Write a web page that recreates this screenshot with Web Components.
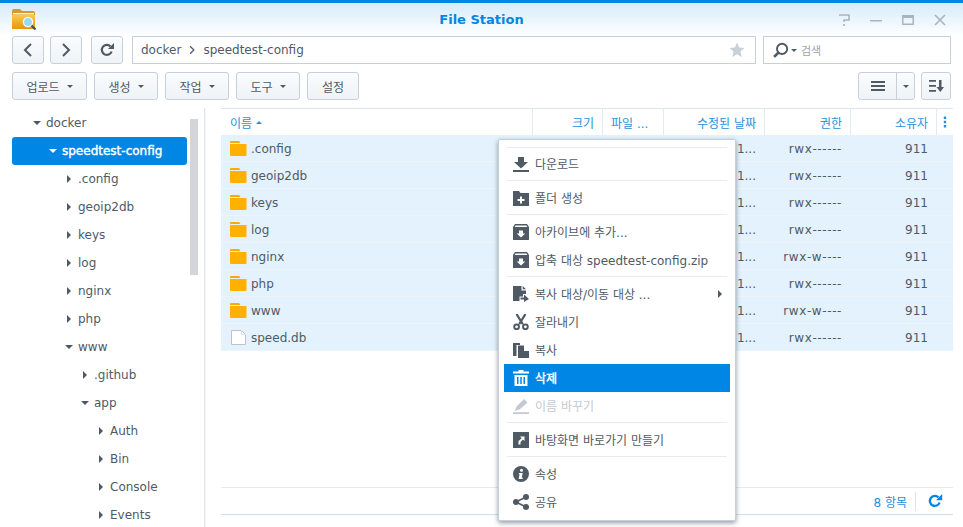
<!DOCTYPE html>
<html lang="ko">
<head>
<meta charset="utf-8">
<title>File Station</title>
<style>
  html, body { margin: 0; padding: 0; background: #fff; overflow: hidden; }
  body { font: 12px "DejaVu Sans", "Noto Sans CJK KR", sans-serif; color: #505a64; }
</style>
</head>
<body>
<fs-window>
  <fs-titlebar slot="title">File Station</fs-titlebar>
  <fs-toolbar slot="toolbar"></fs-toolbar>
  <fs-tree slot="tree"></fs-tree>
  <fs-grid slot="grid"></fs-grid>
  <fs-menu slot="menu"></fs-menu>
</fs-window>

<script>
(function() {
  'use strict';

  const ICONS = {
    back: '<path d="M11 2 5 8l6 6" fill="none" stroke="currentColor" stroke-width="2"/>',
    forward: '<path d="M5 2l6 6-6 6" fill="none" stroke="currentColor" stroke-width="2"/>',
    reload: '<path d="M12.600 9.500A5 5 0 1 1 11.400 4.400" fill="none" stroke="currentColor" stroke-width="2.200"/><path d="M9 7h6V1z" fill="currentColor"/>',
    star: '<path d="M8 .5l2.200 5 5.300.5-4 3.600 1.200 5.300L8 12.200l-4.700 2.700 1.200-5.300-4-3.600 5.300-.5z" fill="currentColor"/>',
    search: '<circle cx="9.500" cy="6.500" r="4.800" fill="none" stroke="currentColor" stroke-width="1.800"/><path d="M6 10l-4 4" stroke="currentColor" stroke-width="2.600"/>',
    list: '<path d="M1 3h14v2H1zM1 7h14v2H1zM1 11h14v2H1z" fill="currentColor"/>',
    sort: '<path d="M1 2h7v1.700H1zM1 7h7v1.700H1zM1 12h7v1.700H1zM11 2h2.500v7H16l-3.700 5-3.800-5H11z" fill="currentColor"/>',
    help: '<path d="M3 3h10v5H8v2M8 12v2" fill="none" stroke="currentColor" stroke-width="1.600"/>',
    min: '<path d="M2 8h12v1.500H2z" fill="currentColor"/>',
    max: '<path d="M2 3h12v10H2zM3.500 6v5.500h9V6z" fill="currentColor" fill-rule="evenodd"/>',
    close: '<path d="M3 3l10 10M13 3 3 13" stroke="currentColor" stroke-width="1.600"/>',
    kebab: '<path d="M6.800 2.500h2.400v2.400H6.800zM6.800 6.800h2.400v2.400H6.800zM6.800 11.100h2.400v2.400H6.800z" fill="currentColor"/>',
    download: '<path d="M5 1h6v5h4l-7 6.500L1 6h4zM0 14h16v2H0z" fill="currentColor"/>',
    newfolder: '<path fill-rule="evenodd" fill="currentColor" d="M0 1h6l1.500 2H16v13H0zM7 6.500V9H4.500v2H7v2.500h2V11h2.500V9H9V6.500z"/>',
    archive: '<path fill-rule="evenodd" fill="currentColor" d="M2 0h12l2 3v13H0V3zM2.600 1.400 1.700 3h12.600l-.9-1.600zM6 6.500V9.500H3.700L8 13.500l4.300-4H10v-3z"/>',
    copyto: '<path fill="currentColor" d="M0 0h8.500v4.500H13V8H10v2.500H6.500V15H0zM9.700 0 13 3.300H9.700z"/><path fill="currentColor" d="M7.500 11.500H11V8.500l5 4.500-5 3v-2.500H7.500z"/>',
    cut: '<path d="M3.500 0l6.300 10.200M12.500 0 6.200 10.200" stroke="currentColor" stroke-width="2.200" fill="none"/><circle cx="3.600" cy="12.800" r="2.400" fill="none" stroke="currentColor" stroke-width="2"/><circle cx="12.400" cy="12.800" r="2.400" fill="none" stroke="currentColor" stroke-width="2"/>',
    copy: '<path fill="currentColor" d="M0 1h7v2H3.500v11H0zM5 3.500h5.500L16 9v7H5zM11 4v5h5z"/>',
    trash: '<path fill="currentColor" fill-rule="evenodd" d="M5.500 0h5v1.500H16V3.500H0V1.500h5.500zM1.500 5h13v11h-13zM4 7v7h1.500V7zM7.250 7v7h1.500V7zM10.500 7v7H12V7z"/>',
    rename: '<path fill="currentColor" d="M11 1l3.500 3.500-8 7L2 13l1.500-4.500zM0 14.200h16V16H0z"/>',
    shortcut: '<path fill="currentColor" fill-rule="evenodd" d="M0 0h16v16H0zM7 4.500l1.700 1.700-3.200 2.800V12.500h2V10L9.900 7.500 11.500 9V4.500z"/>',
    info: '<path fill="currentColor" fill-rule="evenodd" d="M8 0a8 8 0 1 0 0 16A8 8 0 0 0 8 0zM8.500 2.700a1.500 1.500 0 1 1 0 3 1.500 1.500 0 0 1 0-3zM6 7h3.700l-1 4.700h1.200l-.3 1.300H5.600l1-4.700H5.700z"/>',
    share: '<circle cx="13" cy="3" r="3" fill="currentColor"/><circle cx="3" cy="8" r="3" fill="currentColor"/><circle cx="13" cy="13" r="3" fill="currentColor"/><path d="M13 3 3 8l10 5" fill="none" stroke="currentColor" stroke-width="1.600"/>',
    refresh: '<path d="M12.600 9.500A5 5 0 1 1 11.400 4.400" fill="none" stroke="currentColor" stroke-width="2.300"/><path d="M9 7.200h6.200V1z" fill="currentColor"/>'
  };

  // small base class, every element gets its markup from render()
  class Base extends HTMLElement {
    constructor() {
      super();
      this.attachShadow({mode: 'open'});
    }
    connectedCallback() {
      this.shadowRoot.innerHTML = this.render();
    }
  }

  customElements.define('fs-icon', class extends Base {
    render() {
      const size = this.getAttribute('size') || 16;
      return `<style>
        :host { display: inline-flex; flex: none; width: ${size}px; height: ${size}px; }
        svg { display: block; width: 100%; height: 100%; }
      </style><svg viewBox="0 0 16 16">${ICONS[this.getAttribute('name')] || ''}</svg>`;
    }
  });

  customElements.define('fs-caret', class extends Base {
    render() {
      // down / up / right triangles made of css borders
      const dir = this.getAttribute('dir') || 'down';
      const s = this.getAttribute('s') || 4;
      const c = this.getAttribute('c') || 'currentColor';
      const shape = {
        down: `border-left:${s}px solid transparent;border-right:${s}px solid transparent;border-top:${s}px solid ${c};`,
        up: `border-left:${s}px solid transparent;border-right:${s}px solid transparent;border-bottom:${s}px solid ${c};`,
        right: `border-top:${s}px solid transparent;border-bottom:${s}px solid transparent;border-left:${s}px solid ${c};`
      }[dir];
      return `<style>:host { display: inline-block; flex: none; width: 0; height: 0; ${shape} }</style>`;
    }
  });

  customElements.define('fs-window', class extends Base {
    render() {
      return `<style>
        :host { display: flex; flex-direction: column; position: relative; width: 963px; height: 527px; overflow: hidden; background: #fff; }
        .body { flex: 1; display: flex; min-height: 0; }
      </style>
      <slot name="title"></slot>
      <slot name="toolbar"></slot>
      <div class="body"><slot name="tree"></slot><slot name="grid"></slot></div>
      <slot name="menu"></slot>`;
    }
  });

  customElements.define('fs-titlebar', class extends Base {
    render() {
      return `<style>
        :host { display: block; flex: none; height: 33px; border-top: 3px solid #0086e5; background: linear-gradient(#d6ebfa, #fff); }
        .bar { height: 100%; display: flex; align-items: center; padding: 0 12px; }
        .logo { width: 24px; height: 21px; margin-top: -1px; flex: none; }
        .name { flex: 1; text-align: center; font-weight: bold; font-size: 13px; color: #0086e5; padding-left: 91px; }
        .btns { display: flex; gap: 16px; color: #aab4c0; margin-right: 3px; }
      </style>
      <div class="bar">
        <svg class="logo" viewBox="0 0 24 21">
          <defs><linearGradient id="g" x1="0" y1="0" x2="0" y2="1"><stop offset="0" stop-color="#fbc94a"/><stop offset="1" stop-color="#e8940f"/></linearGradient></defs>
          <path d="M0 2q0-2 2-2h6l2 2h11q2 0 2 2v15q0 1-1 1H1q-1 0-1-1z" fill="#d99a25"/>
          <path d="M1 4h21v1.500H1z" fill="#fff3d0"/>
          <path d="M0 6h23v13q0 1-1 1H1q-1 0-1-1z" fill="url(#g)"/>
          <circle cx="16" cy="13" r="4.600" fill="#9ad9f5" stroke="#f4fbff" stroke-width="1.400"/>
          <path d="M19.500 16.500l4 4" stroke="#46505a" stroke-width="2.200"/>
        </svg>
        <div class="name"><slot></slot></div>
        <div class="btns">
          <fs-icon name="help"></fs-icon><fs-icon name="min"></fs-icon><fs-icon name="max"></fs-icon><fs-icon name="close"></fs-icon>
        </div>
      </div>`;
    }
  });

  customElements.define('fs-button', class extends Base {
    render() {
      return `<style>
        :host { display: inline-flex; flex: none; align-items: center; justify-content: center; gap: 7px; box-sizing: border-box; height: 28px;
          border: 1px solid #c6d0dc; border-radius: 3px; background: linear-gradient(#fafcfd, #eff3f7); color: #505a64; font-size: 12px; }
      </style><slot></slot>`;
    }
  });

  customElements.define('fs-toolbar', class extends Base {
    render() {
      const menus = [['업로드', 75], ['생성', 64], ['작업', 64], ['도구', 64]];
      return `<style>
        :host { display: block; flex: none; height: 72px; box-sizing: border-box; padding: 0 12px; }
        .row { display: flex; align-items: center; height: 28px; }
        .row + .row { margin-top: 8px; }
        .nav { width: 32px; color: #505a64; }
        .field { box-sizing: border-box; height: 28px; border: 1px solid #c6d0dc; display: flex; align-items: center; background: #fff; }
        .addr { flex: none; width: 624px; margin-left: 9px; padding: 0 9px 0 8px; color: #505a64; }
        .addr span { white-space: nowrap; }
        .addr .sep { color: #505a64; margin: 0 6px; }
        .star { margin-left: auto; color: #c8d0da; margin-right: 1px; }
        .search { flex: none; width: 188px; margin-left: 7px; padding-left: 8px; color: #505a64; gap: 2px; }
        .hint { color: #9aa4b0; font-size: 11px; margin-left: 2px; }
        .gap6 { margin-left: 6px; }
        .gap7 { margin-left: 7px; }
        .gap9 { margin-left: 9px; }
        .spacer { flex: 1; }
        .seg { width: 57px; padding: 0; gap: 0; justify-content: flex-start; }
        .seg .l { width: 37px; display: flex; justify-content: center; border-right: 1px solid #c6d0dc; height: 26px; align-items: center; }
        .seg .r { flex: 1; display: flex; justify-content: center; }
      </style>
      <div class="row">
        <fs-button class="nav"><fs-icon name="back"></fs-icon></fs-button>
        <fs-button class="nav gap6"><fs-icon name="forward"></fs-icon></fs-button>
        <fs-button class="nav gap9"><fs-icon name="reload"></fs-icon></fs-button>
        <div class="field addr"><span>docker</span><fs-icon class="sep" name="forward" size="10"></fs-icon><span>speedtest-config</span><fs-icon class="star" name="star"></fs-icon></div>
        <div class="field search"><fs-icon name="search" size="17"></fs-icon><fs-caret s="3"></fs-caret><span class="hint">검색</span></div>
      </div>
      <div class="row">
        ${menus.map((m, i) => `<fs-button style="width:${m[1]}px;margin-left:${i ? 7 : 0}px">${m[0]}<fs-caret s="3"></fs-caret></fs-button>`).join('')}
        <fs-button class="gap7" style="width:52px">설정</fs-button>
        <div class="spacer"></div>
        <fs-button class="seg"><span class="l"><fs-icon name="list"></fs-icon></span><span class="r"><fs-caret s="3"></fs-caret></span></fs-button>
        <fs-button class="gap6" style="width:30px"><fs-icon name="sort"></fs-icon></fs-button>
      </div>`;
    }
  });

  customElements.define('fs-tree', class extends Base {
    render() {
      const rows = [
        [0, 'down', 'docker'], [1, 'down', 'speedtest-config', true],
        [2, 'right', '.config'], [2, 'right', 'geoip2db'], [2, 'right', 'keys'], [2, 'right', 'log'], [2, 'right', 'nginx'], [2, 'right', 'php'],
        [2, 'down', 'www'], [3, 'right', '.github'], [3, 'down', 'app'],
        [4, 'right', 'Auth'], [4, 'right', 'Bin'], [4, 'right', 'Console'], [4, 'right', 'Events']
      ];
      return `<style>
        :host { display: block; flex: none; box-sizing: border-box; width: 205px; height: 419px; padding-top: 1px; border-right: 1px solid #e3e7ec; box-shadow: 1px 0 1px #f3f5f7; position: relative; overflow: hidden; }
        .row { display: flex; align-items: center; height: 28px; margin-left: 12px; width: 175px; box-sizing: border-box; border-radius: 3px; white-space: nowrap; }
        .row.sel { background: #0086e5; color: #fff; -webkit-text-stroke: .4px #fff; }
        .arrow { width: 8px; display: flex; justify-content: center; margin-right: 5px; }
        .thumb { position: absolute; left: 190px; top: 11px; width: 8px; height: 156px; background: #d3d5d8; }
      </style>
      ${rows.map(r => `<div class="row${r[3] ? ' sel' : ''}" style="padding-left:${21 + r[0] * 16}px">
        <span class="arrow"><fs-caret dir="${r[1]}" s="4"></fs-caret></span><span>${r[2]}</span></div>`).join('')}
      <div class="thumb"></div>`;
    }
  });

  customElements.define('fs-grid', class extends Base {
    render() {
      const cols = 'grid-template-columns: 312px 70px 61px 101px 86px 86px 16px;';
      const perms = ['rwx------', 'rwx------', 'rwx------', 'rwx------', 'rwx-w----', 'rwx------', 'rwx-w----', 'rwx------'];
      const names = ['.config', 'geoip2db', 'keys', 'log', 'nginx', 'php', 'www', 'speed.db'];
      const folder = `<svg class="ico" viewBox="0 0 17 15"><path d="M0 1q0-1 1-1h8l1.500 2H0z" fill="#ffa800"/><path d="M0 3h16.500v11q0 1-1 1H1q-1 0-1-1z" fill="#ffb000"/></svg>`;
      const file = `<svg class="ico" viewBox="0 0 17 15"><path d="M1.500.5h10l4 4v10h-14z" fill="#fff" stroke="#b9c3cd"/><path d="M11.500.500v4h4" fill="none" stroke="#dfe4ea"/></svg>`;
      return `<style>
        :host { flex: 1; min-width: 0; display: flex; flex-direction: column; height: 419px; box-sizing: border-box; padding: 0 10px 0 16px; }
        .head, .row { display: grid; ${cols} }
        .head { height: 27px; box-sizing: border-box; border-top: 1px solid #dde5ee; color: #2b8fd9; align-items: center; }
        .head > div { height: 26px; border-right: 1px solid #e2eaf2; box-sizing: border-box; padding: 1px 8px 0 0; white-space: nowrap; display: flex; align-items: center; justify-content: flex-end; gap: 4px; }
        .head > div:first-child { justify-content: flex-start; padding-left: 9px; }
        .head > .ft { justify-content: flex-start; padding-left: 8px; }
        .head > div:last-child { border: 0; padding: 0; justify-content: center; }
        .rows { flex: 1; }
        .row { height: 27px; box-sizing: border-box; background: #e3f2fd; border-bottom: 1px solid #edf5fb; align-items: center; }
        .row > div { text-align: right; padding: 1px 9px 0 0; white-space: nowrap; }
        .row > .n { text-align: left; padding: 0 0 0 9px; display: flex; align-items: center; gap: 4px; }
        .n span { padding-top: 1px; }
        .perm { letter-spacing: .6px; }
        .ico { width: 17px; height: 15px; flex: none; }
        .foot { flex: none; height: 28px; box-sizing: border-box; margin-bottom: 12px; border-top: 1px solid #e6eaee; border-bottom: 1px solid #d3e1ee; display: flex; align-items: center; justify-content: flex-end; color: #1e8fe1; }
        .foot .div { width: 1px; height: 19px; background: #dde3e9; margin: 0 11px 0 8px; }
        .foot fs-icon { margin-right: 10px; color: #0086e5; }
      </style>
      <div class="head">
        <div>이름<fs-caret dir="up" s="3"></fs-caret></div><div>크기</div><div class="ft">파일 ...</div><div>수정된 날짜</div><div>권한</div><div>소유자</div><div><fs-icon name="kebab"></fs-icon></div>
      </div>
      <div class="rows">
        ${names.map((n, i) => `<div class="row"><div class="n">${i < 7 ? folder : file}<span>${n}</span></div><div></div><div></div><div>1...</div><div class="perm">${perms[i]}</div><div>911</div><div></div></div>`).join('')}
      </div>
      <div class="foot">8 항목<span class="div"></span><fs-icon name="refresh"></fs-icon></div>`;
    }
  });

  customElements.define('fs-menu-item', class extends Base {
    render() {
      const sub = this.hasAttribute('sub') ? '<fs-caret class="sub" dir="right" s="4"></fs-caret>' : '';
      return `<style>
        :host { display: flex; align-items: center; height: 28px; padding-left: 9px; gap: 6px; color: #505a64; white-space: nowrap; position: relative; }
        :host([active]) { background: #0086e5; color: #fff; }
        :host([active]) .t { -webkit-text-stroke: .4px #fff; }
        :host([disabled]) { color: #c3c9d0; }
        fs-icon { margin-top: -1px; }
        .t { margin-top: -2px; }
        .sub { position: absolute; right: 8px; top: 10px; }
      </style><fs-icon name="${this.getAttribute('icon')}"></fs-icon><span class="t"><slot></slot></span>${sub}`;
    }
  });

  customElements.define('fs-menu', class extends Base {
    render() {
      const sep = '<div class="sep"></div>';
      const item = (icon, text, attr) => `<fs-menu-item icon="${icon}" ${attr || ''}>${text}</fs-menu-item>`;
      return `<style>
        :host { display: block; position: absolute; left: 498px; top: 139px; width: 238px; height: 382px; box-sizing: border-box; padding: 7px 5px 0;
          background: #fff; border: 1px solid #c5d0dc; border-radius: 2px; box-shadow: 0 2px 5px rgba(60,70,85,.55); }
        .sep { height: 6px; box-sizing: border-box; margin: 0 3px; position: relative; }
        .sep::after { content: ''; position: absolute; left: 0; right: 0; top: 2px; height: 1px; background: #e7ebef; }
        .top { height: 3px; }
        .top::after { top: 0; }
      </style>
      <div class="sep top"></div>
      ${item('download', '다운로드')}${sep}
      ${item('newfolder', '폴더 생성')}${sep}
      ${item('archive', '아카이브에 추가...')}${item('archive', '압축 대상 speedtest-config.zip')}${sep}
      ${item('copyto', '복사 대상/이동 대상 ...', 'sub')}${item('cut', '잘라내기')}${item('copy', '복사')}
      ${item('trash', '삭제', 'active')}${item('rename', '이름 바꾸기', 'disabled')}${sep}
      ${item('shortcut', '바탕화면 바로가기 만들기')}${sep}
      ${item('info', '속성')}${item('share', '공유')}`;
    }
  });
}());
</script>
</body>
</html>
